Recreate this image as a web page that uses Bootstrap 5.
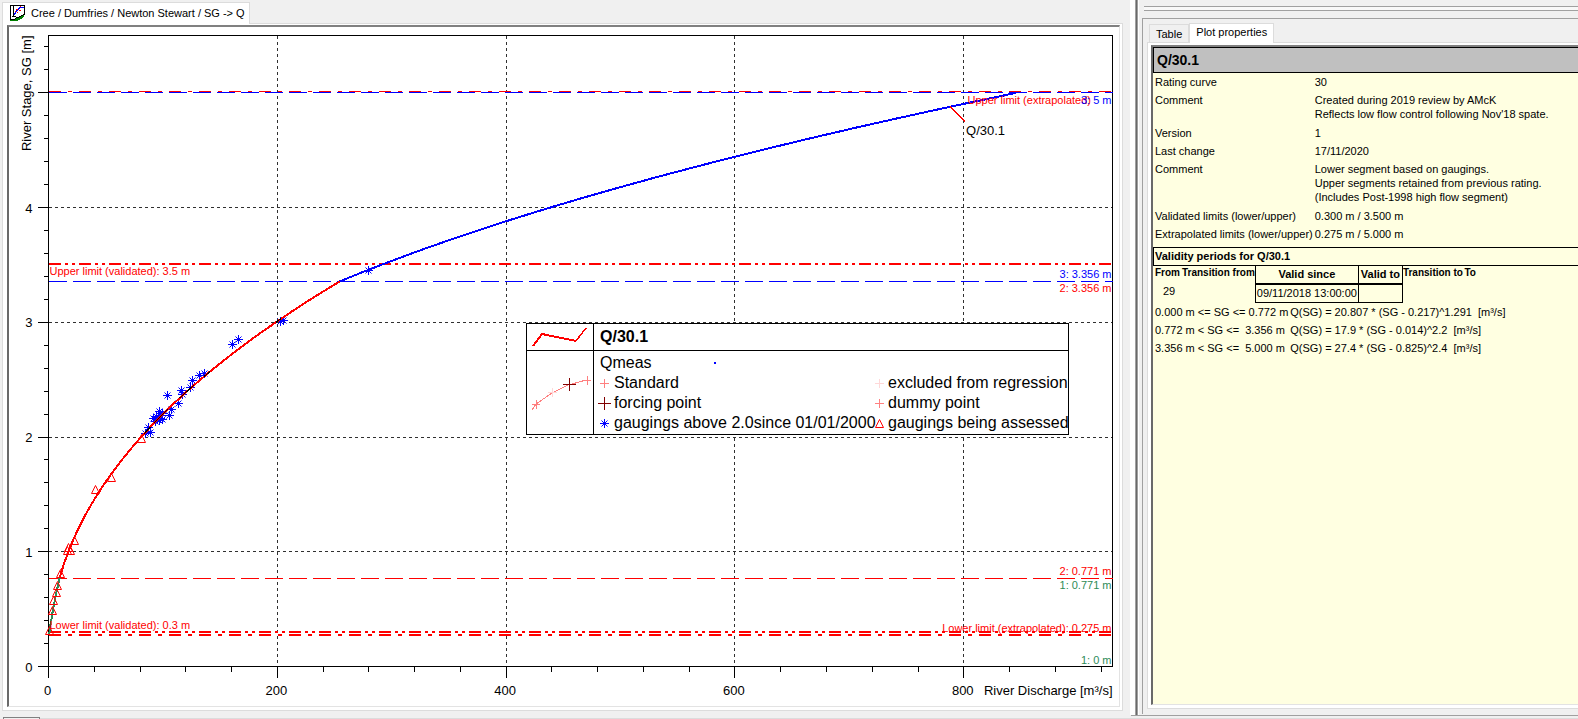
<!DOCTYPE html>
<html lang="en">
<head>
<meta charset="utf-8">
<meta name="viewport" content="width=device-width, initial-scale=1">
<title>Cree / Dumfries / Newton Stewart / SG -&gt; Q</title>
<link href="https://cdn.jsdelivr.net/npm/bootstrap@5.3.0/dist/css/bootstrap.min.css" rel="stylesheet">
<style>
  body { background: #f0f0f0; color: #000; font: 11px/14px "Liberation Sans", Arial, sans-serif; }
  .main-area { padding: 2px 7px 4px 2px; min-width: 0; }
  .win-tabs { --bs-nav-tabs-border-width: 0; border: 0; position: relative; z-index: 1; }
  .win-tabs .nav-link { color: #000; border: 1px solid #dcdcdc; border-bottom: 0; border-radius: 0; background: #f0f0f0; margin: 0; line-height: 14px; }
  .win-tabs .nav-link.active { background: #fff; color: #000; border-color: #dcdcdc; }
  .win-tabs .doc-tab.nav-link { padding: 0 4px 1px 6px; height: 22px; margin-bottom: -1px; }
  .pane { background: #fff; border: 1px solid #dcdcdc; min-height: 0; }
  .doc-pane { padding: 1px 2px 3px 4px; }
  .sunken { border: 2px solid #696969; border-top-color: #808080; border-right: 1px solid #e3e3e3; border-bottom: 1px solid #e3e3e3; min-height: 0; }
  #chart { left: 0; top: 0; }
  #chart text { font-size: 13px; }
  #chart .note { font-size: 11px; }
  .legend-box { right: 50px; top: 296px; border: 1px solid #000; background: #fff; font-size: 16px; line-height: 20px; width: 543px; }
  .legend-sym { flex: 0 0 67px; border-right: 1px solid #000; }
  .legend-head { height: 27px; border-bottom: 1px solid #000; }
  .legend-name { padding: 3px 6px; }
  .legend-body { height: 83px; }
  .legend-title { padding: 2px 6px 0; }
  .legend-dot { left: 120px; top: 11px; }
  .legend-grid { grid-template-columns: 18px 257px 17px auto; padding-left: 2px; line-height: 20px; white-space: nowrap; }
  .splitter { flex: 0 0 8px; background: linear-gradient(to right, #fff 0 5px, #a0a0a0 5px 6px, #696969 6px 7px, #a0a0a0 7px 8px); }
  .side { flex: 0 0 440px; padding: 6px 0 1px 4px; background: #f0f0f0; border-left: 1px solid #fff; }
  .grip { height: 5px; border-top: 1px solid #a0a0a0; border-bottom: 1px solid #a0a0a0; background: #f8f8f8; margin-left: 1px; }
  .side-frame { border: 1px solid #a0a0a0; border-width: 1px 0 0 1px; margin: 7px 0 0 -1px; padding: 4px 0 5px 4px; min-height: 0; }
  .side-tabs { padding-left: 2px; }
  .side-tabs .nav-link { padding: 2px 6px; height: 18px; }
  .side-tabs .nav-link.active { padding: 1px 6px 4px; height: 20px; margin-bottom: -1px; }
  .side-pane { border-right: 0; padding: 2px 0 3px 3px; }
  .props { background: #ffffe1; border-right: 0; }
  .props-title { background: #c0c0c0; border: 1px solid #000; border-right: 0; font-size: 14px; line-height: 24px; padding-left: 3px; }
  .info { margin-bottom: 4px; }
  .info td { padding: 2px 0 2px 2px; vertical-align: top; white-space: nowrap; }
  .info .multi td { padding-bottom: 3px; }
  .info td:first-child { width: 158px; }
  .section-title { border: 1px solid #000; border-right: 0; line-height: 17px; padding-left: 1px; }
  .validity { border-collapse: collapse; margin-left: 2px; }
  .validity th, .validity td { height: 18px; padding: 0; vertical-align: top; white-space: nowrap; }
  .validity th { font-size: 10px; }
  .validity .boxed { border: 1px solid #000; border-top-width: 0; font-size: 11px; text-align: center; line-height: 17px; padding: 0 1px; }
  .validity th.boxed { border-bottom-width: 2px; }
  .formulas td { padding: 2px 0 2px 2px; white-space: pre; }
  .formulas td:first-child { width: 133px; }
  .foot { height: 4px; }
  .foot-tab { width: 37px; margin-left: 3px; border: 1px solid #808080; border-bottom: 0; margin-top: 2px; }
  .foot-line { border-bottom: 1px solid #dcdcdc; }
  .foot-side { flex: 0 0 447px; border-top: 1px solid #a0a0a0; border-bottom: 1px solid #dcdcdc; }
</style>
</head>
<body>
<div class="d-flex flex-column vh-100 overflow-hidden">
  <div class="d-flex flex-fill" style="min-height:0">
    <main class="main-area d-flex flex-column flex-fill">
      <ul class="nav nav-tabs win-tabs">
        <li class="nav-item">
          <button type="button" class="nav-link active doc-tab d-flex align-items-center">
            <svg width="18" height="18" viewBox="0 0 18 18" class="me-1" aria-hidden="true" shape-rendering="crispEdges">
              <path d="M1 14h6l4-1 4-3v3l-3 2-4 2H1z" fill="#008000"/>
              <path d="M1.500 1.500h14v9l-3 1-3 2h-2l-2 2h-4z" fill="#fff" stroke="#000"/>
              <path d="M4.500 2v10M3 12.500h4" stroke="#000" fill="none"/>
              <path d="M5.500 11l1-3 2-2 2-2 4-1" stroke="#00f" fill="none"/>
              <path d="M6 7.500h1M7 5.500h2M10 6.500h2M11 2.500h1M8 8.500h1" stroke="#f00"/>
            </svg>
            <span>Cree / Dumfries / Newton Stewart / SG -&gt; Q</span>
          </button>
        </li>
      </ul>
      <div class="pane doc-pane d-flex flex-column flex-fill">
        <div class="sunken position-relative flex-fill overflow-hidden">
          <svg id="chart" class="position-absolute w-100 h-100" role="img" aria-label="Rating curve Q/30.1"></svg>
          <div class="legend-box position-absolute">
            <div class="legend-head d-flex">
              <div class="legend-sym"><svg width="66" height="26" aria-hidden="true" shape-rendering="crispEdges"><path d="M6 22L15 10L49 17" fill="none" stroke="#f00" stroke-width="2"/><path d="M49 17L59 4" stroke="#f00" stroke-width="1.500"/></svg></div>
              <div class="legend-name fw-bold">Q/30.1</div>
            </div>
            <div class="legend-body d-flex">
              <div class="legend-sym"><svg width="66" height="82" aria-hidden="true" shape-rendering="crispEdges" fill="none">
                <path d="M5 59L9 53L25 42L41 34L60 29" stroke="#ff8080"/>
                <path d="M5 53.500h8M9.500 49v9M55 29.500h9M60.500 25v9" stroke="#ff8080"/>
                <path d="M21 41.500h9M25.500 37v9" stroke="#ffd8d8"/>
                <path d="M36 33.500h13M42.500 27v13" stroke="#800000"/></svg></div>
              <div class="position-relative">
                <div class="legend-title">Qmeas</div>
                <svg class="position-absolute legend-dot" width="2" height="2" aria-hidden="true"><rect width="2" height="2" fill="#00f"/></svg>
                <div class="d-grid legend-grid" id="legendGrid"></div>
              </div>
            </div>
          </div>
        </div>
      </div>
    </main>
    <div class="splitter"></div>
    <aside class="side d-flex flex-column">
      <div class="grip"></div>
      <div class="side-frame d-flex flex-column flex-fill">
        <ul class="nav nav-tabs win-tabs side-tabs align-items-end">
          <li class="nav-item"><button type="button" class="nav-link">Table</button></li>
          <li class="nav-item"><button type="button" class="nav-link active">Plot properties</button></li>
        </ul>
        <div class="pane side-pane d-flex flex-column flex-fill">
          <div class="sunken props flex-fill overflow-hidden">
            <div class="props-title fw-bold">Q/30.1</div>
            <table class="info">
              <tr><td>Rating curve</td><td>30</td></tr>
              <tr class="multi"><td>Comment</td><td>Created during 2019 review by AMcK<br>Reflects low flow control following Nov'18 spate.</td></tr>
              <tr><td>Version</td><td>1</td></tr>
              <tr><td>Last change</td><td>17/11/2020</td></tr>
              <tr class="multi"><td>Comment</td><td>Lower segment based on gaugings.<br>Upper segments retained from previous rating.<br>(Includes Post-1998 high flow segment)</td></tr>
              <tr><td>Validated limits (lower/upper)</td><td>0.300 m / 3.500 m</td></tr>
              <tr><td>Extrapolated limits (lower/upper)</td><td>0.275 m / 5.000 m</td></tr>
            </table>
            <div class="section-title fw-bold">Validity periods for Q/30.1</div>
            <table class="validity">
              <colgroup><col style="width:27px"><col style="width:73px"><col style="width:102px"><col style="width:44px"><col style="width:62px"><col></colgroup>
              <tr><th>From</th><th>Transition from</th><th class="boxed">Valid since</th><th class="boxed">Valid to</th><th>Transition to</th><th>To</th></tr>
              <tr><td class="ps-2">29</td><td></td><td class="boxed">09/11/2018 13:00:00</td><td class="boxed"></td><td></td><td></td></tr>
            </table>
            <table class="formulas">
              <tr><td>0.000 m &lt;= SG &lt;= 0.772 m</td><td>Q(SG) = 20.807 * (SG - 0.217)^1.291  [m³/s]</td></tr>
              <tr><td>0.772 m &lt; SG &lt;=  3.356 m</td><td>Q(SG) = 17.9 * (SG - 0.014)^2.2  [m³/s]</td></tr>
              <tr><td>3.356 m &lt; SG &lt;=  5.000 m</td><td>Q(SG) = 27.4 * (SG - 0.825)^2.4  [m³/s]</td></tr>
            </table>
          </div>
        </div>
      </div>
    </aside>
  </div>
  <div class="foot d-flex">
    <div class="foot-tab"></div>
    <div class="foot-line flex-fill"></div>
    <div class="foot-side"></div>
  </div>
</div>
<script src="https://cdn.jsdelivr.net/npm/bootstrap@5.3.0/dist/js/bootstrap.bundle.min.js"></script>
<script>
  const X_MAX = 930, Y_MAX = 5.5;

  // rating segments: lower stage, upper stage, factor, offset, exponent
  const segments = [
    { from: 0.275, to: 0.771, a: 20.807, h0: 0.217, n: 1.291, color: '#2e8b57' },
    { from: 0.771, to: 3.356, a: 17.9, h0: 0.014, n: 2.2, color: '#ff0000' },
    { from: 3.356, to: 5, a: 27.4, h0: 0.825, n: 2.4, color: '#0000ff' }
  ];

  const recent = [[280,3.45],[202.6,3.01],[205,3.02],[160.7,2.805],[166,2.846],[136.5,2.552],[131.8,2.538],
    [125.7,2.495],[124,2.436],[116.1,2.407],[117.3,2.375],[103.9,2.36],[113.8,2.294],[107.7,2.242],[105.6,2.189],
    [96.9,2.221],[99.5,2.203],[92.2,2.163],[94.6,2.177],[96.9,2.192],[98.1,2.163],[96.9,2.142],[99.5,2.155],
    [93.4,2.134],[87.2,2.085],[84.6,2.027],[89,2.041]];
  const assessed = [[0.5,0.318],[3.5,0.49],[4.8,0.571],[7.4,0.645],[8.3,0.702],[10.9,0.81],[17,1.011],[18.8,1.011],
    [17.9,1.04],[22.3,1.098],[41.5,1.547],[55,1.647],[81.7,1.983]];

  const plus = (x, y, r, c) => `<path d="M${x - r - 0.5} ${y}h${2 * r + 1}M${x} ${y - r - 0.5}v${2 * r + 1}" stroke="${c}" fill="none" shape-rendering="crispEdges"/>`;
  const star = (x, y) => `<path d="M${x - 4.5} ${y}h9M${x} ${y - 4.5}v9M${x - 3} ${y - 3}l6 6M${x + 3} ${y - 3}l-6 6" stroke="#0000ff" fill="none"/>`;
  const triangle = (x, y) => `<path d="M${x} ${y - 4}l4 8h-8z" stroke="#ff0000" fill="none"/>`;
  const snap = v => Math.floor(v) + 0.5;

  function drawChart() {
    const svg = document.getElementById('chart');
    const W = svg.clientWidth, H = svg.clientHeight;
    const L = 39.5, R = W - 6.5, T = 8.5, B = H - 39.5;
    const px = q => L + q * (R - L) / X_MAX;
    const py = h => B - h * (B - T) / Y_MAX;
    const line = (x1, y1, x2, y2, color = '#000', dash = '', w = 1) =>
      `<line x1="${x1}" y1="${y1}" x2="${x2}" y2="${y2}" stroke="${color}" stroke-width="${w}" stroke-dasharray="${dash}" shape-rendering="crispEdges"/>`;
    const text = (x, y, s, color = '#000', anchor = 'start', cls = '') =>
      `<text x="${x}" y="${y}" fill="${color}" text-anchor="${anchor}" class="${cls}">${s}</text>`;
    const curve = (s, from, to, color, w) => {
      let d = '';
      for (let i = 0; i <= 60; i++) {
        const h = from + (to - from) * i / 60;
        d += (i ? 'L' : 'M') + px(s.a * Math.pow(h - s.h0, s.n)).toFixed(1) + ' ' + py(h).toFixed(1);
      }
      return `<path d="${d}" fill="none" stroke="${color}" stroke-width="${w}" shape-rendering="crispEdges"/>`;
    };
    let out = '';

    for (let h = 1; h <= 4; h++) out += line(L, snap(py(h)), R, snap(py(h)), '#303030', '3 3');
    for (let q = 200; q <= 800; q += 200) out += line(snap(px(q)), T, snap(px(q)), B, '#303030', '3 3');
    out += `<rect x="${L}" y="${T}" width="${R - L}" height="${B - T}" fill="none" stroke="#000" shape-rendering="crispEdges"/>`;
    for (let i = 0; i <= 27; i++) { const y = snap(py(i / 5)); out += line(L - (i % 5 ? 5 : 11), y, L, y); }
    for (let q = 0; q <= X_MAX; q += 40) { const x = snap(px(q)); out += line(x, B, x, B + (q % 200 ? 5 : 11)); }

    // stage limits
    const dashDot = '12 7 4 7', dashDotDot = '12 4 3 4 3 4', longDash = '18 6';
    out += line(L, snap(py(5)) - 1, R, snap(py(5)) - 1, '#ff0000', dashDot);
    out += line(L, snap(py(5)), R, snap(py(5)), '#0000ff', longDash);
    out += line(L, Math.floor(py(3.5)), R, Math.floor(py(3.5)), '#ff0000', dashDotDot, 2);
    out += line(L, snap(py(3.356)), R, snap(py(3.356)), '#0000ff', longDash);
    out += line(L, snap(py(0.771)), R, snap(py(0.771)), '#ff0000', longDash);
    out += line(L, Math.round(py(0.3)), R, Math.round(py(0.3)), '#ff0000', dashDotDot, 2);
    out += line(L, Math.round(py(0.275)), R, Math.round(py(0.275)), '#ff0000', dashDot, 2);

    for (const [q, h] of recent) out += star(snap(px(q)), snap(py(h)));
    for (const s of segments) out += curve(s, s.from, s.to, s.color, 2);
    for (const [a, b] of [[2.03, 2.09], [2.12, 2.24], [2.34, 2.45], [2.53, 2.57], [3, 3.03]]) out += curve(segments[1], a, b, '#000', 1);
    for (const [q, h] of assessed) out += triangle(snap(px(q)), snap(py(h)));

    // limit labels
    const red = '#ff0000', blue = '#0000ff', green = '#2e8b57', e = R - 1;
    out += text(e - 144, py(5) + 11, 'Upper limit (extrapolated)', red, 'start', 'note');
    out += text(e, py(5) + 11, '3: 5 m', blue, 'end', 'note');
    out += text(L + 1, py(3.5) + 10, 'Upper limit (validated): 3.5 m', red, 'start', 'note');
    out += text(e, py(3.356) - 3, '3: 3.356 m', blue, 'end', 'note');
    out += text(e, py(3.356) + 11, '2: 3.356 m', red, 'end', 'note');
    out += text(e, py(0.771) - 3, '2: 0.771 m', red, 'end', 'note');
    out += text(e, py(0.771) + 11, '1: 0.771 m', green, 'end', 'note');
    out += text(L + 1, py(0.3) - 3, 'Lower limit (validated): 0.3 m', red, 'start', 'note');
    out += text(e, py(0.275) - 3, 'Lower limit (extrapolated): 0.275 m', red, 'end', 'note');
    out += text(e, B - 3, '1: 0 m', green, 'end', 'note');

    // curve name
    const cx = px(788), cy = py(4.88);
    out += line(cx, cy, cx + 15, cy + 15, red, '', 2);
    out += text(cx + 16, cy + 28, 'Q/30.1');

    // axis labels
    for (let h = 0; h <= 4; h++) out += text(L - 16, py(h) + 5, h, '#000', 'end');
    for (let q = 0; q <= 800; q += 200) out += text(px(q) - 1, B + 28, q, '#000', 'middle');
    out += text(R, B + 28, 'River Discharge [m³/s]', '#000', 'end');
    out += `<text transform="translate(${L - 18} ${T}) rotate(-90)" text-anchor="end">River Stage, SG [m]</text>`;
    svg.innerHTML = out;
  }

  const legend = [
    [plus(8.5, 10.5, 4, '#ff8080'), 'Standard'], [plus(8.5, 10.5, 4, '#ffd8d8'), 'excluded from regression'],
    [plus(8.5, 10.5, 6, '#800000'), 'forcing point'], [plus(8.5, 10.5, 4, '#ff8080'), 'dummy point'],
    [star(8.5, 10.5), 'gaugings above 2.0since 01/01/2000'], [triangle(8.5, 10.5), 'gaugings being assessed']
  ];
  document.getElementById('legendGrid').innerHTML = legend
    .map(([mark, label]) => `<svg width="17" height="20" aria-hidden="true">${mark}</svg><span>${label}</span>`).join('');

  drawChart();
  window.addEventListener('resize', drawChart);
</script>
</body>
</html>
